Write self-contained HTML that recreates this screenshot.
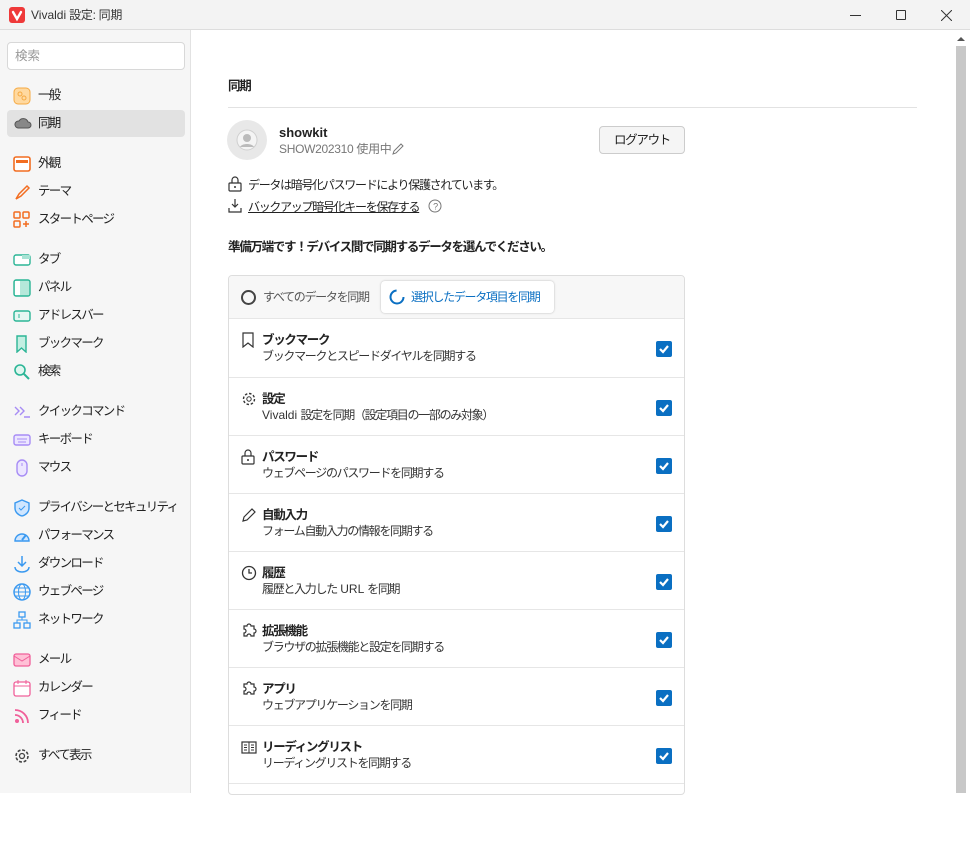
<!DOCTYPE html>
<html><head><meta charset="utf-8"><style>
*{box-sizing:border-box;margin:0;padding:0}
body{width:970px;height:793px;overflow:hidden;font-family:"Liberation Sans","Noto Sans CJK JP",sans-serif;font-size:12px;line-height:1.2;color:#222;background:#fff;position:relative;letter-spacing:-1.3px}
.l{letter-spacing:0}
.title{position:absolute;left:0;top:0;width:970px;height:30px;background:#f3f3f3;border-bottom:1px solid #ddd}
.title .t{position:absolute;left:31px;top:8px;font-size:12px;color:#333;letter-spacing:-0.3px}
.side{position:absolute;left:0;top:30px;width:191px;height:763px;background:#f6f6f6;border-right:1px solid #e2e2e2}
.search{position:absolute;left:7px;top:12px;width:178px;height:28px;border:1px solid #d8d8d8;border-radius:4px;background:#fff;color:#999;padding:6px 7px;font-size:12.5px;letter-spacing:0}
.it{position:absolute;left:7px;width:178px;height:27px;border-radius:4px;padding-left:31px;line-height:27px;font-size:12.5px;color:#222;letter-spacing:-1.7px}
.it.sel{background:#e2e2e2}
.it svg{position:absolute;left:6px;top:5px}
.abs{position:absolute}
.box{position:absolute;left:228px;top:275px;width:457px;height:520px;border:1px solid #ddd;border-radius:4px}
.row{position:absolute;left:0;width:455px;height:58px;border-top:1px solid #e6e6e6}
.row .h{position:absolute;left:33px;top:14px;font-weight:bold;font-size:12.5px}
.row .d{position:absolute;left:33px;top:30px;font-size:12px;color:#333}
.row .cb{position:absolute;left:427px;top:22px;width:16px;height:16px;background:#0a6fc2;border-radius:2px}
.row svg.ic{position:absolute;left:12px;top:13px}
</style></head><body>
<div class="title">
<svg class="abs" style="left:9px;top:7px" width="16" height="16"><rect width="16" height="16" rx="3" fill="#ef3939"/><path d="M4 5l4 7 4-7" stroke="#fff" stroke-width="2.4" fill="none" stroke-linecap="round"/></svg>
<div class="t"><span class="l">Vivaldi</span> 設定: 同期</div>
<div class="abs" style="left:850px;top:15px;width:11px;height:1px;background:#333"></div>
<div class="abs" style="left:896px;top:10px;width:10px;height:10px;border:1px solid #333;border-radius:1px"></div>
<svg class="abs" style="left:941px;top:10px" width="11" height="11"><path d="M0 0L11 11M11 0L0 11" stroke="#333" stroke-width="1"/></svg>
</div>
<div class="side">
<div class="search">検索</div>
<div class="it" style="top:52px"><svg width="18" height="18"><rect x="1" y="1" width="16" height="16" rx="4" fill="#ffd9a0" stroke="#f5a942"/><circle cx="7" cy="7" r="2" fill="none" stroke="#f5a942"/><circle cx="11" cy="11" r="2" fill="none" stroke="#f5a942"/></svg>一般</div>
<div class="it sel" style="top:80px"><svg width="20" height="16"><path d="M5 13h10a3 3 0 000-6 5 5 0 00-9-1 3.5 3.5 0 00-1 7z" fill="#888" stroke="#555"/></svg>同期</div>
<div class="it" style="top:120px"><svg width="18" height="18"><rect x="1" y="2" width="16" height="14" rx="2" fill="#fff" stroke="#f26d21" stroke-width="1.6"/><rect x="3" y="5" width="12" height="3" fill="#f26d21"/></svg>外観</div>
<div class="it" style="top:148px"><svg width="18" height="18"><path d="M3 16l3-5 8-8 2 2-8 8z" fill="none" stroke="#f26d21" stroke-width="1.5"/></svg>テーマ</div>
<div class="it" style="top:176px"><svg width="18" height="18"><rect x="1" y="1" width="6" height="6" rx="1" fill="none" stroke="#f26d21" stroke-width="1.5"/><rect x="10" y="1" width="6" height="6" rx="1" fill="none" stroke="#f26d21" stroke-width="1.5"/><rect x="1" y="10" width="6" height="6" rx="1" fill="none" stroke="#f26d21" stroke-width="1.5"/><path d="M13 10v6M10 13h6" stroke="#f26d21" stroke-width="1.5"/></svg>スタートページ</div>
<div class="it" style="top:216px"><svg width="18" height="18"><rect x="1" y="4" width="16" height="10" rx="2" fill="#fff" stroke="#2bb596" stroke-width="1.4"/><rect x="9" y="4" width="8" height="4" fill="#a8e3d4"/></svg>タブ</div>
<div class="it" style="top:244px"><svg width="18" height="18"><rect x="1" y="1" width="16" height="16" rx="2" fill="#b5e8da" stroke="#2bb596" stroke-width="1.4"/><rect x="2" y="2" width="5" height="14" fill="#fff"/></svg>パネル</div>
<div class="it" style="top:272px"><svg width="18" height="18"><rect x="1" y="4" width="16" height="10" rx="2" fill="#e6f7f2" stroke="#2bb596" stroke-width="1.4"/><path d="M6 7v4" stroke="#2bb596"/></svg>アドレスバー</div>
<div class="it" style="top:300px"><svg width="18" height="18"><path d="M4 1h9v16l-4.5-4L4 17z" fill="#c3efe2" stroke="#2bb596" stroke-width="1.4"/></svg>ブックマーク</div>
<div class="it" style="top:328px"><svg width="18" height="18"><circle cx="7" cy="7" r="5" fill="#dff6ef" stroke="#2bb596" stroke-width="1.6"/><path d="M11 11l5 5" stroke="#2bb596" stroke-width="2"/></svg>検索</div>
<div class="it" style="top:368px"><svg width="18" height="18"><path d="M2 4l4 4-4 4M7 4l4 4-4 4M11 14h6" fill="none" stroke="#a78cf5" stroke-width="1.4"/></svg>クイックコマンド</div>
<div class="it" style="top:396px"><svg width="18" height="18"><rect x="1" y="4" width="16" height="10" rx="2" fill="#ece6ff" stroke="#a78cf5" stroke-width="1.4"/><path d="M4 8h10M5 11h8" stroke="#a78cf5"/></svg>キーボード</div>
<div class="it" style="top:424px"><svg width="18" height="18"><rect x="4" y="1" width="10" height="16" rx="5" fill="#ece6ff" stroke="#a78cf5" stroke-width="1.4"/><path d="M9 4v3" stroke="#a78cf5"/></svg>マウス</div>
<div class="it" style="top:464px"><svg width="18" height="18"><path d="M9 1l7 3v5c0 4-3 7-7 8-4-1-7-4-7-8V4z" fill="#cfe6ff" stroke="#3a99f0" stroke-width="1.4"/><path d="M6 9l2 2 4-4" stroke="#3a99f0" fill="none"/></svg>プライバシーとセキュリティ</div>
<div class="it" style="top:492px"><svg width="18" height="18"><path d="M2 14a7 7 0 1114 0z" fill="#cfe6ff" stroke="#3a99f0" stroke-width="1.4"/><path d="M9 13l4-5" stroke="#3a99f0" stroke-width="2"/></svg>パフォーマンス</div>
<div class="it" style="top:520px"><svg width="18" height="18"><path d="M9 1v10M5 7l4 4 4-4M2 12c0 3 3 5 7 5s7-2 7-5" fill="none" stroke="#3a99f0" stroke-width="1.5"/></svg>ダウンロード</div>
<div class="it" style="top:548px"><svg width="18" height="18"><circle cx="9" cy="9" r="8" fill="none" stroke="#3a99f0" stroke-width="1.5"/><ellipse cx="9" cy="9" rx="3.5" ry="8" fill="none" stroke="#3a99f0"/><path d="M1 9h16M2 5h14M2 13h14" stroke="#3a99f0"/></svg>ウェブページ</div>
<div class="it" style="top:576px"><svg width="18" height="18"><rect x="6" y="1" width="6" height="5" fill="none" stroke="#3a99f0" stroke-width="1.3"/><rect x="1" y="12" width="6" height="5" fill="none" stroke="#3a99f0" stroke-width="1.3"/><rect x="11" y="12" width="6" height="5" fill="none" stroke="#3a99f0" stroke-width="1.3"/><path d="M9 6v3M4 12V9h10v3" fill="none" stroke="#3a99f0"/></svg>ネットワーク</div>
<div class="it" style="top:616px"><svg width="18" height="18"><rect x="1" y="3" width="16" height="12" rx="2" fill="#ffc0d6" stroke="#f0609a" stroke-width="1.3"/><path d="M1 5l8 5 8-5" fill="none" stroke="#f0609a"/></svg>メール</div>
<div class="it" style="top:644px"><svg width="18" height="18"><rect x="1" y="3" width="16" height="14" rx="2" fill="#fff" stroke="#f0609a" stroke-width="1.3"/><path d="M1 7h16M5 1v4M13 1v4" stroke="#f0609a"/></svg>カレンダー</div>
<div class="it" style="top:672px"><svg width="18" height="18"><circle cx="4" cy="14" r="2" fill="#f0609a"/><path d="M2 8a8 8 0 018 8M2 3a13 13 0 0113 13" fill="none" stroke="#f0609a" stroke-width="1.8"/></svg>フィード</div>
<div class="it" style="top:712px"><svg width="18" height="18"><circle cx="9" cy="9" r="6" fill="none" stroke="#444" stroke-width="1.6" stroke-dasharray="3 1.7"/><circle cx="9" cy="9" r="2.5" fill="none" stroke="#444" stroke-width="1.3"/></svg>すべて表示</div>
</div>
<div class="abs" style="left:955px;top:33px;width:12px;height:760px;background:#fff"></div>
<svg class="abs" style="left:956px;top:36px" width="10" height="6"><path d="M1 5h8L5 1z" fill="#555"/></svg>
<div class="abs" style="left:956px;top:46px;width:10px;height:747px;background:#c8c8c8"></div>

<div class="abs" style="left:228px;top:79px;font-weight:bold;font-size:12.5px">同期</div>
<div class="abs" style="left:228px;top:107px;width:689px;height:1px;background:#e2e2e2"></div>
<div class="abs" style="left:227px;top:120px;width:40px;height:40px;border-radius:50%;background:#e8e8e8"></div>
<svg class="abs" style="left:236px;top:129px" width="22" height="22"><circle cx="11" cy="11" r="10" fill="#f4f4f4" stroke="#cfcfcf"/><circle cx="11" cy="9" r="4" fill="#bbb"/><path d="M4 18c2-4 12-4 14 0" fill="#bbb"/></svg>
<div class="abs" style="left:279px;top:125px;font-weight:bold;font-size:13px;letter-spacing:0">showkit</div>
<div class="abs" style="left:279px;top:142px;font-size:12px;color:#777;letter-spacing:-0.3px">SHOW202310 使用中</div>
<svg class="abs" style="left:391px;top:143px" width="13" height="13"><path d="M2 11l1-3 7-7 2 2-7 7z" fill="none" stroke="#777"/></svg>
<div class="abs" style="left:599px;top:126px;width:86px;height:28px;border:1px solid #ccc;border-radius:4px;background:#f5f5f5;text-align:center;line-height:26px;font-size:12.5px">ログアウト</div>
<svg class="abs" style="left:228px;top:176px" width="14" height="16"><rect x="1" y="7" width="12" height="8" rx="1" fill="none" stroke="#333" stroke-width="1.2"/><path d="M4 7V4a3 3 0 016 0v3" fill="none" stroke="#333" stroke-width="1.2"/><circle cx="7" cy="11" r="1" fill="#333"/></svg>
<div class="abs" style="left:248px;top:178px">データは暗号化パスワードにより保護されています。</div>
<svg class="abs" style="left:228px;top:198px" width="14" height="16"><path d="M7 1v8M4 6l3 3 3-3M1 10v4h12v-4" fill="none" stroke="#333" stroke-width="1.2"/></svg>
<div class="abs" style="left:248px;top:200px;text-decoration:underline">バックアップ暗号化キーを保存する</div>
<svg class="abs" style="left:428px;top:199px" width="14" height="14"><circle cx="7" cy="7" r="6" fill="none" stroke="#777"/><text x="7" y="10.5" font-size="9" text-anchor="middle" fill="#777" font-family="Liberation Sans">?</text></svg>
<div class="abs" style="left:228px;top:240px;font-weight:bold;font-size:12.5px">準備万端です！デバイス間で同期するデータを選んでください。</div>

<div class="box">
<div class="abs" style="left:0;top:0;width:455px;height:42px;background:#f7f7f7;border-radius:4px 4px 0 0"></div>
<div class="abs" style="left:12px;top:14px;width:15px;height:15px;border:2px solid #444;border-radius:50%"></div>
<div class="abs" style="left:34px;top:14px;color:#555">すべてのデータを同期</div>
<div class="abs" style="left:152px;top:5px;width:173px;height:32px;background:#fff;border-radius:4px;box-shadow:0 0 2px rgba(0,0,0,.25)"></div>
<svg class="abs" style="left:160px;top:13px" width="16" height="16"><circle cx="8" cy="8" r="6.5" fill="none" stroke="#0a6fc2" stroke-width="2" stroke-dasharray="30 11"/></svg>
<div class="abs" style="left:182px;top:14px;color:#0a6fc2">選択したデータ項目を同期</div>

<div class="row" style="top:42px"><svg class="ic" width="14" height="16"><path d="M2 1h10v14l-5-4-5 4z" fill="none" stroke="#333" stroke-width="1.2"/></svg><div class="h">ブックマーク</div><div class="d">ブックマークとスピードダイヤルを同期する</div><div class="cb"><svg width="16" height="16"><path d="M4 8l3 3 5-6" stroke="#fff" stroke-width="2.2" fill="none"/></svg></div></div>
<div class="row" style="top:101px"><svg class="ic" width="16" height="16"><circle cx="8" cy="8" r="5.5" fill="none" stroke="#333" stroke-width="1.4" stroke-dasharray="2.5 1.8"/><circle cx="8" cy="8" r="2.2" fill="none" stroke="#333"/></svg><div class="h">設定</div><div class="d"><span class="l">Vivaldi </span>設定を同期（設定項目の一部のみ対象）</div><div class="cb"><svg width="16" height="16"><path d="M4 8l3 3 5-6" stroke="#fff" stroke-width="2.2" fill="none"/></svg></div></div>
<div class="row" style="top:159px"><svg class="ic" width="14" height="16"><rect x="1" y="7" width="12" height="8" rx="1" fill="none" stroke="#333" stroke-width="1.2"/><path d="M4 7V4a3 3 0 016 0v3" fill="none" stroke="#333" stroke-width="1.2"/><circle cx="7" cy="11" r="1" fill="#333"/></svg><div class="h">パスワード</div><div class="d">ウェブページのパスワードを同期する</div><div class="cb"><svg width="16" height="16"><path d="M4 8l3 3 5-6" stroke="#fff" stroke-width="2.2" fill="none"/></svg></div></div>
<div class="row" style="top:217px"><svg class="ic" width="16" height="16"><path d="M2 14l1-4 8-8 3 3-8 8z" fill="none" stroke="#333" stroke-width="1.2"/></svg><div class="h">自動入力</div><div class="d">フォーム自動入力の情報を同期する</div><div class="cb"><svg width="16" height="16"><path d="M4 8l3 3 5-6" stroke="#fff" stroke-width="2.2" fill="none"/></svg></div></div>
<div class="row" style="top:275px"><svg class="ic" width="16" height="16"><circle cx="8" cy="8" r="6.5" fill="none" stroke="#333" stroke-width="1.3"/><path d="M8 4v4h3" fill="none" stroke="#333" stroke-width="1.3"/></svg><div class="h">履歴</div><div class="d">履歴と入力した<span class="l"> URL </span>を同期</div><div class="cb"><svg width="16" height="16"><path d="M4 8l3 3 5-6" stroke="#fff" stroke-width="2.2" fill="none"/></svg></div></div>
<div class="row" style="top:333px"><svg class="ic" width="16" height="16"><path d="M6 3a2 2 0 014 0h3v3a2 2 0 010 4v3h-3a2 2 0 00-4 0H3v-3a2 2 0 000-4V3z" fill="none" stroke="#333" stroke-width="1.2"/></svg><div class="h">拡張機能</div><div class="d">ブラウザの拡張機能と設定を同期する</div><div class="cb"><svg width="16" height="16"><path d="M4 8l3 3 5-6" stroke="#fff" stroke-width="2.2" fill="none"/></svg></div></div>
<div class="row" style="top:391px"><svg class="ic" width="16" height="16"><path d="M6 3a2 2 0 014 0h3v3a2 2 0 010 4v3h-3a2 2 0 00-4 0H3v-3a2 2 0 000-4V3z" fill="none" stroke="#333" stroke-width="1.2"/></svg><div class="h">アプリ</div><div class="d">ウェブアプリケーションを同期</div><div class="cb"><svg width="16" height="16"><path d="M4 8l3 3 5-6" stroke="#fff" stroke-width="2.2" fill="none"/></svg></div></div>
<div class="row" style="top:449px"><svg class="ic" width="16" height="16"><rect x="1" y="3" width="14" height="11" fill="none" stroke="#333" stroke-width="1.2"/><path d="M8 3v11M3 6h3M3 8.5h3M3 11h3M10 6h3M10 8.5h3M10 11h3" stroke="#333"/></svg><div class="h">リーディングリスト</div><div class="d">リーディングリストを同期する</div><div class="cb"><svg width="16" height="16"><path d="M4 8l3 3 5-6" stroke="#fff" stroke-width="2.2" fill="none"/></svg></div></div>
<div class="row" style="top:507px"></div>
</div>
</body></html>
